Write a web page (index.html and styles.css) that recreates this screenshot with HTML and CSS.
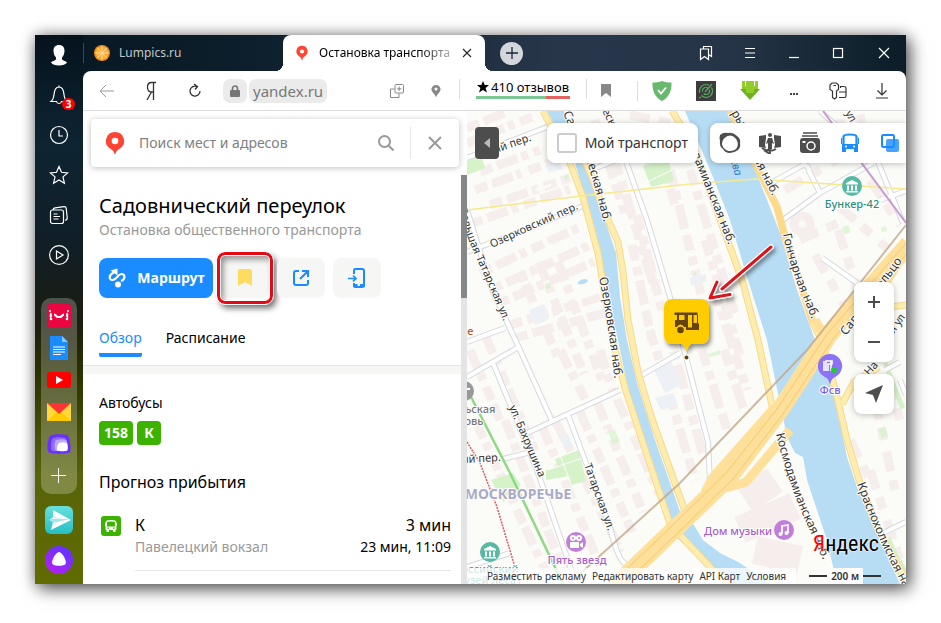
FILE: index.html
```html
<!DOCTYPE html>
<html lang="ru">
<head>
<meta charset="utf-8">
<meta name="viewport" content="width=device-width, initial-scale=1">
<title>Остановка транспорта</title>
<link rel="stylesheet" href="styles.css">
</head>
<body>
<div class="window">
  <nav class="sidebar" aria-label="Боковая панель">
    <button class="side-btn" aria-label="Профиль"><svg width="20" height="24" viewBox="0 0 20 24"><path fill="#fff" d="M10 2c3.600 0 5.600 2.300 5.500 6-.1 3-1.200 5.200-2.500 6.500v2c1 1.300 4 1.500 5 3C17 21.500 13.500 22.500 10 22.500S3 21.500 2 19.500c1-1.500 4-1.700 5-3v-2C5.700 13.200 4.600 11 4.500 8 4.400 4.300 6.400 2 10 2z"/></svg></button>
    <button class="side-btn" aria-label="Уведомления"><svg width="20" height="22" viewBox="0 0 20 22" class="line"><path d="M10 2.500v-1M2 17.500c2-1.500 2.500-3 3-7C5.400 5.500 7 3 10 3s4.600 2.500 5 7.500c.5 4 1 5.500 3 7h-5.500c-.3 1.500-1.200 2-2.500 2s-2.200-.5-2.500-2z"/></svg><span class="badge">3</span></button>
    <button class="side-btn" aria-label="История"><svg width="20" height="20" viewBox="0 0 20 20" class="line"><circle cx="10" cy="10" r="8.500"/><path d="M10 5v6h4"/></svg></button>
    <button class="side-btn" aria-label="Избранное"><svg width="20" height="20" viewBox="0 0 20 20" class="line"><path d="M10 1.500l2.500 5.800 6.200.6-4.700 4 1.400 6.300L10 15l-5.400 3.200L6 11.900l-4.700-4 6.200-.6z"/></svg></button>
    <button class="side-btn" aria-label="Коллекции"><svg width="20" height="20" viewBox="0 0 20 20" class="line"><rect x="1.500" y="5" width="13" height="13.500" rx="2"/><path d="M4 5c.2-1.500.8-2 2-2.200l9-1.200c1.500-.2 2 .4 2.200 1.700l1 9.500c.1 1.500-.6 2.200-2 2.500M4.500 9h4M4.500 11.500h6.500M4.500 14h5"/></svg></button>
    <button class="side-btn" aria-label="Видео"><svg width="20" height="20" viewBox="0 0 20 20" class="line"><circle cx="10" cy="10" r="9.400"/><path d="M7.500 6v8l6.500-4z"/></svg></button>
    <div class="dock">
      <a class="dock-item" href="#" aria-label="ivi"><svg width="24" height="24"><rect width="24" height="24" rx="3" fill="#ea0640"/><g fill="none" stroke="#fff" stroke-width="2.200"><path d="M3 9.500c1.500.5 1 3.500 0 4M21 9.500c-1.500.5-1 3.500 0 4M7 10.500c2 0 2 2.500 4 2.500h2c2 0 2-2.500 4-2.500"/></g><g fill="#fff"><circle cx="3" cy="7" r="1"/><circle cx="21" cy="7" r="1"/><circle cx="4" cy="15" r="1.300"/><circle cx="20" cy="15" r="1.300"/></g></svg></a>
      <a class="dock-item" href="#" aria-label="Документы"><svg width="24" height="24"><path fill="#1a8cff" d="M3 0h12l6 6v18H3z"/><path fill="#8bc4ff" d="M15 0l6 6h-6z"/><path stroke="#fff" stroke-width="1.200" d="M6 11h12M6 13.500h12M6 16h12M6 18.500h8"/></svg></a>
      <a class="dock-item" href="#" aria-label="YouTube"><svg width="24" height="16"><rect width="24" height="16" rx="3" fill="red"/><path fill="#fff" d="M9 4l7 4-7 4z"/></svg></a>
      <a class="dock-item" href="#" aria-label="Почта"><svg width="24" height="18"><path fill="#ffd83c" d="M0 0h24v18H0z"/><path fill="#fc0" d="M0 18L12 7l12 11z"/><path fill="#f33" d="M0 0h24L12 11z"/></svg></a>
      <a class="dock-item" href="#" aria-label="Коллекция"><svg width="24" height="20"><path fill="#6a30ff" d="M4 1C8 0 17 0 20 1c3 1 4.500 15 3 17s-19 2.500-21.500 0S1 2 4 1z"/><path fill="#8d69ff" d="M6 4c3-1 10-1 12 0s3 12 2 13H5C3 16 4 5 6 4z"/><path fill="#bba7ff" d="M9 6c3-1 8-1 10 0s2 10 1 11H9C7 16 7 7 9 6z"/><path fill="#fff" d="M12 9c2-1 6-1 7.500 0s1.500 6.500.5 7.500-8 1-9.500 0S10.500 10 12 9z"/></svg></a>
      <button class="dock-item" aria-label="Добавить"><svg width="16" height="16"><path stroke="#fff" stroke-width="1" d="M7.500 0v15M0 7.500h15"/></svg></button>
    </div>
    <button class="side-btn side-btn-first" aria-label="Мессенджер"><svg width="28" height="28"><defs><linearGradient id="tq" x1="0" y1="0" x2="0" y2="1"><stop offset="0" stop-color="#67e0dd"/><stop offset="1" stop-color="#25bfc4"/></linearGradient></defs><rect width="28" height="28" rx="6" fill="url(#tq)"/><path fill="#fff" d="M8 4l18 10L6 24l2-8-3.500-2L8 11z"/><path fill="#a7e4e6" d="M4 13h21L8 17zM7 11l14 2-14-1z"/></svg></button>
    <button class="side-btn" aria-label="Алиса"><svg width="28" height="28"><defs><linearGradient id="al" x1=".8" y1="0" x2=".2" y2="1"><stop offset="0" stop-color="#5a36ff"/><stop offset="1" stop-color="#b81ef5"/></linearGradient></defs><circle cx="14" cy="14" r="14" fill="url(#al)"/><path fill="#fff" d="M14 6c3.200 0 8 9 6.700 11.700-1.300 2.700-12.100 2.700-13.400 0C6 15 10.800 6 14 6z"/></svg></button>
  </nav>

  <div class="browser">
    <header class="tabs">
      <a class="tab" href="#"><svg width="16" height="16" viewBox="0 0 16 16"><circle cx="8" cy="8" r="8" fill="#f08a17"/><circle cx="8" cy="8" r="6.400" fill="#ffae35"/><path stroke="#ffdc9b" d="M8 1v14M1 8h14M3 3l10 10M13 3L3 13"/></svg><span>Lumpics.ru</span></a>
      <div class="tab tab-active"><svg width="12" height="16" viewBox="0 0 20 24"><path fill="#ff4433" d="M10 0a9.500 9.500 0 0 1 5 17.500c-3 1.500-4 3.500-4.500 6.500h-1C9 21 8 19 5 17.500A9.500 9.500 0 0 1 10 0z"/><circle cx="10" cy="9.500" r="3.500" fill="#fff"/></svg><span class="tab-title">Остановка транспорта</span><button aria-label="Закрыть вкладку"><svg width="10" height="10"><path stroke="#222" stroke-width="1.100" d="M1 1l8 8M9 1L1 9"/></svg></button></div>
      <button class="new-tab" aria-label="Новая вкладка"><svg width="12" height="12"><path stroke="#172939" stroke-width="1.300" d="M6 0v12M0 6h12"/></svg></button>
      <div class="window-buttons">
        <button aria-label="Закладки"><svg width="14" height="16" class="line"><path d="M1.500 4h8v10.500l-4-3-4 3zM4.500 4V1.500h8v10l-3-2"/></svg></button>
        <button aria-label="Меню"><svg width="12" height="12" class="line"><path d="M1 1.500h10M1 6h10M1 10.500h10"/></svg></button>
        <button aria-label="Свернуть"><svg width="10" height="12" class="line"><path d="M0 10.500h10"/></svg></button>
        <button aria-label="Развернуть"><svg width="12" height="12" class="line"><rect x="1.500" y="1.500" width="9" height="9"/></svg></button>
        <button aria-label="Закрыть"><svg width="12" height="12" class="line"><path d="M1 1l10 10M11 1L1 11"/></svg></button>
      </div>
    </header>

    <div class="toolbar">
      <div class="nav-buttons">
        <button aria-label="Назад"><svg width="16" height="14" fill="none" stroke="#999"><path d="M15 7H1l6-6M1 7l6 6"/></svg></button>
        <button aria-label="Яндекс"><svg width="12" height="20" fill="none" stroke="#333" stroke-width="1.300"><path d="M8.500 19V1.500H6.500C3.500 1.500 2.500 3 2.500 6s1.500 5 4 5h2M6.500 11L2 19M7 1.500h4"/></svg></button>
        <button aria-label="Обновить"><svg width="14" height="16" fill="none" stroke="#333" stroke-width="1.300"><path d="M9 3.500A5 5 0 1 0 12 8M6 1l3.500 2.500L7 6.500"/></svg></button>
      </div>
      <div class="address"><button class="lock" aria-label="Защищено"><svg width="10" height="12"><path fill="none" stroke="#777" stroke-width="1.700" d="M2.500 6V3.500a2.500 2.500 0 0 1 5 0V6"/><rect y="5" width="10" height="7" rx="1" fill="#777"/></svg></button><a class="url" href="#">yandex.ru</a></div>
      <div class="page-tools">
        <button aria-label="Копировать"><svg width="14" height="14" fill="none" stroke="#888"><rect x="5" y=".5" width="8.500" height="8.500" rx="1"/><path d="M4.500 5H.5v8.500H9V9.500M9.200 2.500V7M7 4.800h4.500"/></svg></button>
        <button aria-label="Место"><svg width="10" height="14"><path fill="#888" d="M5 1a4.300 4.300 0 0 1 3.500 7C7 10 5.500 11.500 5 13.500 4.500 11.500 3 10 1.500 8A4.300 4.300 0 0 1 5 1z"/><circle cx="5" cy="5" r="1.500" fill="#fff"/></svg></button>
      </div>
      <a class="reviews" href="#"><span><svg width="12" height="12"><path d="M6 0l1.700 4H12L8.600 7 10 11.500 6 9l-4 2.500L3.400 7 0 4h4.300z"/></svg>410 отзывов</span></a>
      <button class="bookmark" aria-label="В закладки"><svg width="10" height="14"><path fill="#888" d="M0 0h10v13L5 9l-5 4z"/></svg></button>
      <div class="extensions">
        <button aria-label="Защита"><svg width="20" height="20"><path fill="#68b86d" d="M10 0c3 1 6 1.500 9.500 1.500C20 11 16 17 10 20 4 17 0 11 .5 1.500 4 1.500 7 1 10 0z"/><path fill="none" stroke="#fff" stroke-width="1.800" d="M6 9l3 3.500 5-6"/></svg></button>
        <button aria-label="Радар"><svg width="20" height="20"><path fill="#3d3b3d" d="M0 0h20v20H0z"/><g fill="none" stroke="#53ae5a" stroke-width="1.200"><circle cx="10" cy="10" r="6.500" stroke-dasharray="15 3"/><circle cx="10" cy="10" r="3.500" stroke-dasharray="8 2"/><path d="M9 11l7-8M5 16l-2 1"/></g></svg></button>
        <button aria-label="Загрузка"><svg width="20" height="20"><path fill="#91cc2d" d="M2 0h3v5h1V0h8v5h1V0h3v8H2z"/><path fill="#6eb022" d="M0 8h20L10 19z"/><path fill="#91cc2d" d="M6 7h8v5h-8z"/></svg></button>
        <button aria-label="Ещё"><svg width="10" height="10"><path fill="#444" d="M1 7h2v2H1zM4 7h2v2H4zM7 7h2v2H7z"/></svg></button>
        <button aria-label="Пароли"><svg width="18" height="18" fill="none" stroke="#333" stroke-width="1.200"><path d="M3 1h4.500l2 2v4.500l-2 1.500v6.500L5.500 17l-2-1.500V9L1 7.500V3zM4.500 3.500H7M11.500 6V4.500H15Q17 4.500 17 6.500V14q0 1.500-1.500 1.500H10M10 10h7"/></svg></button>
        <button aria-label="Загрузки"><svg width="14" height="16" fill="none" stroke="#333" stroke-width="1.200"><path d="M7 0v12M2.500 7.500L7 12l4.500-4.500M1 15h12"/></svg></button>
      </div>
    </div>

    <main class="content">
      <section class="panel">
        <form class="search" role="search">
          <svg width="20" height="24" viewBox="0 0 20 24"><path fill="#ff4433" d="M10 1a9 9 0 0 1 5 16.500c-3 1.500-4 3-4.500 5.500h-1C9 20.500 8 19 5 17.500A9 9 0 0 1 10 1z"/><circle cx="10" cy="10" r="3.300" fill="#fff"/></svg>
          <input type="search" aria-label="Поиск" placeholder="Поиск мест и адресов">
          <button type="button" aria-label="Найти"><svg width="18" height="18" fill="none" stroke="#999" stroke-width="2"><circle cx="7.500" cy="7.500" r="5.500"/><path d="M11.500 11.500l5 5"/></svg></button>
          <button type="button" class="clear" aria-label="Закрыть"><svg width="16" height="16"><path stroke="#999" stroke-width="2" d="M2 2l12 12M14 2L2 14"/></svg></button>
        </form>
        <div class="card">
          <div class="summary">
            <h1>Садовнический переулок</h1>
            <p class="kind">Остановка общественного транспорта</p>
            <div class="actions">
              <button class="route"><svg width="20" height="20" fill="none" stroke="#fff" stroke-width="2.200"><path d="M7 4.500C1.500 6.500 1.500 12 5.500 12 9.500 12 11 6 14.500 6c4 0 4 5.500-.5 7"/><path fill="#fff" stroke="none" d="M3.500 2.500L10.500.5v7z"/><circle cx="11" cy="16.500" r="3" fill="#fff" stroke="none"/></svg>Маршрут</button>
              <button class="action marked" aria-label="Сохранить"><svg width="14" height="18"><path fill="#ffdb60" d="M2 0h10q2 0 2 2v15l-7-4-7 4V2q0-2 2-2z"/></svg></button>
              <button class="action" aria-label="Поделиться"><svg width="18" height="18" fill="none" stroke="#1a8cff" stroke-width="2"><path d="M7 2H4Q2 2 2 4v10q0 2 2 2h10q2 0 2-2v-3M8 10l7-7M10 2h6v6"/></svg></button>
              <button class="action" aria-label="Отправить на телефон"><svg width="20" height="20" fill="none" stroke="#1a8cff" stroke-width="2"><path d="M7 6V3q0-2 1-2h7q2 0 2 2v14q0 2-2 2H8q-1 0-1-2v-2"/><path d="M1 10.500h7M6 7.500l3 3-3 3" stroke-width="1.700"/><path d="M6 17.500h4.500M13 17.500h5" stroke-width="3"/></svg></button>
            </div>
            <nav class="view-tabs"><a class="current" href="#">Обзор</a><a href="#">Расписание</a></nav>
          </div>
          <div class="details">
            <h2 class="buses">Автобусы</h2>
            <div class="lines"><a href="#">158</a><a href="#">К</a></div>
            <h2>Прогноз прибытия</h2>
            <div class="arrival">
              <svg width="20" height="20"><rect width="20" height="20" rx="3" fill="#3bb300"/><path fill="none" stroke="#fff" stroke-width="1.500" d="M5.300 13V6.500Q5.300 4.800 10 4.800t4.700 1.700V13z"/><path fill="#fff" d="M5 10.500h10V14H5zM5.500 14h2.500v2H5.500zM12 14h2.500v2H12zM4 7h1v3H4zM15 7h1v3h-1z"/><path fill="#3bb300" d="M6.500 11.500H8v1.300H6.500zM12 11.500h1.500v1.300H12z"/></svg>
              <div class="arrival-text"><strong>К</strong><span>Павелецкий вокзал</span></div>
              <div class="arrival-time"><strong>3 мин</strong><span>23 мин, 11:09</span></div>
            </div>
          </div>
        </div>
      </section>

      <section class="map" aria-label="Карта">
        <svg class="map-canvas" viewBox="467 111 439 473" preserveAspectRatio="xMidYMid slice">
          <defs>
            <path id="p-oz" d="M492 248L533 229 590 204"/>
            <path id="p-ozn" d="M599 278Q608 320 616 392"/>
            <path id="p-sad" d="M563 113Q570 130 580 147T606 232"/>
            <path id="p-tat" d="M459 209Q468 241 478 262T508 332"/>
            <path id="p-kos" d="M776 434Q787 480 806 522T836 590"/>
            <path id="p-kr" d="M857 484Q872 525 889 559T912 600"/>
            <path id="p-gon" d="M783 234Q789 265 802 295T818 342"/>
            <path id="p-dam" d="M692 154Q707 190 735 262"/>
            <filter id="sh" x="-30%" y="-30%" width="160%" height="160%"><feDropShadow dx="2" dy="3" stdDeviation="2" flood-opacity=".45"/></filter>
          </defs>
          <rect x="467" y="111" width="439" height="473" fill="#fbfcf7"/>
          <g fill="none" stroke="#f5eeec" stroke-width="9">
            <path stroke-dasharray="13 5 22 4 7 6" d="M467 128l40-16M467 143l70-28M480 172l60-22M475 190l85-31M490 205l80-27M470 224l100-35M480 273l100-46M490 290l100-45M497 304l97-42M510 325l90-28M515 338l90-25"/>
            <path stroke-dasharray="20 5 8 7 15 4" d="M520 272l40 90M539 262l45 112M558 262l44 118M485 335l50 116M470 350l30 70M560 350l26 51M600 350l14 45M475 420l70 150M505 420l60 155M542 426l60 145M556 422l65 130M580 412l52 120M597 402l46 110M617 399l42 95"/>
            <path stroke-dasharray="16 6 9 5 25 6" d="M595 120l30 95M615 160l40 130M637 215l25 95M670 170l35 140M690 170l45 145M705 240l35 115M650 125l25 80M668 330l35 125M650 330l45 150M714 290l33 100M702 350l25 80M724 350l20 60M632 245l20 95"/>
            <path stroke-dasharray="20 9 12 12" d="M785 190l60-35M800 240l45-20M840 207l48 42M838 230l20 60M815 255l35 60M870 180l30 45M850 440l20 40M875 400l20 90M890 380l12 50M870 470l30 90M805 132l60-14M630 115l50 10M645 165l40-10"/>
            <path stroke-width="28" d="M740 530l55-24M755 550l45 10M745 500l30-20" stroke-linejoin="round"/>
            <circle cx="802" cy="224" r="8"/>
          </g>
          <g fill="none" stroke="#fbfcf7" stroke-width="3"><path d="M490 180v14M520 165l5 14M536 190l15-5M505 290l25-9M550 244l5 18M660 250l10-4M700 280l12-4M575 300l20-7M595 435l12-5M610 455l12-5M693 310l12-4M520 400l9-3M690 390l15-4"/></g>
          <g fill="#edf0f4"><path d="M529 310l15-6 5 15-14 6zM653 368l18-7 10 24-16 8zM655 398l18-5 5 12-17 5zM690 278l16-4v7l-15 5zM545 165l13-4 5 8-14 3zM560 437l8-3 5 12-8 3z"/></g>
          <g fill="#d5f2c9"><path d="M643 166l25-8 6 23-23 6zM546 470l12-3-3-8 24-9 7 31-14 4-4-9-22 4zM491 480l22-7 8 12-18 17zM467 161l14-6 4 13-18 7zM883 548l7-12q8 20 16 32v16h-3q-14-19-20-36zM887 362l18 45-4 3-18-46z"/><path opacity=".7" d="M545 284l5-2 1 6-5 1zM608 432l7-2 5 12-7 2zM842 227l7-2 1 8-6 1zM881 228l5-2 1 5-5 1zM708 354l12-4v5l-11 2zM692 274l4-2v4zM878 429l7-3 3 10-6 3zM564 176l4-2 1 5-4 1z"/></g>
          <path fill="none" stroke="#fff" d="M548 470l34-12M560 455l10 26M645 183l27-13"/>
          <g fill="#b7ddf5">
            <path d="M547 111h17l21 52 12 34 19 56 4 44 7 43 10 43 18 57 28 80-13 0-27-80-16-57-9-43-11-43-7-44-15-56-10-34z"/>
            <path d="M685 111h43l30 66 22 56 17 57 18 50 15 37 10 46 7 34 10 30 20 46 23 51h-63l-10-44-20-60-4-23-8-4-8-16-7-34-13-63-20-63-17-57-17-43z"/>
            <path d="M675 520l17 2 11 18 17 13 20 10 30 21h-42l-28-24-25-24z"/>
            <path d="M578 282q5-5 10-2-1 5-10 4z"/>
          </g>
          <g fill="none" stroke-linejoin="round">
            <path stroke="#d7d9df" stroke-width="6" d="M467 158l80-31M467 252l63-24 53-22M467 210l25 80 28 60 32 71M467 342l38-14M467 377l50-29M527 433l93-43M493 363l44 107 36 105M568 415l42 112q8 34 16 37M503 459l24-6M642 375l38-22M623 153l24 67 23 77 16 60 22 85 2 40M783 220l37-27 53-30M773 182l30-17q6 0 6 6l11 22M873 150l30 73M822 258l35 25M467 567l43-14M883 533l23-11M596 168l25-10M880 200l26-9M885 370l15-8M820 111l20 18M900 380l6 15"/>
            <path stroke="#fff" stroke-width="4" d="M467 158l80-31M467 252l63-24 53-22M467 210l25 80 28 60 32 71M467 342l38-14M467 377l50-29M527 433l93-43M493 363l44 107 36 105M568 415l42 112q8 34 16 37M503 459l24-6M642 375l38-22M623 153l24 67 23 77 16 60 22 85 2 40M783 220l37-27 53-30M773 182l30-17q6 0 6 6l11 22M873 150l30 73M822 258l35 25M467 567l43-14M883 533l23-11M596 168l25-10M880 200l26-9M885 370l15-8M820 111l20 18M900 380l6 15"/>
            <path stroke="#f7d98a" stroke-width="7" d="M543 111l27 52 13 34 15 56 7 44 9 48 11 43 17 52 29 87M567 123l25 54 12 34 14 31 5 30 5 48 10 52 13 44 35 98M672 111l20 32 38 104 13 36 15 57 16 75M730 111l22 46 25 50 8 30 28 86 10 20 14 54 10 43 13 43 17 44 29 53M680 535l30 32 18 17M842 404l12-22 25-15M866 310l40-5"/>
            <path stroke="#ffedb0" stroke-width="5" d="M543 111l27 52 13 34 15 56 7 44 9 48 11 43 17 52 29 87M567 123l25 54 12 34 14 31 5 30 5 48 10 52 13 44 35 98M672 111l20 32 38 104 13 36 15 57 16 75M730 111l22 46 25 50 8 30 28 86 10 20 14 54 10 43 13 43 17 44 29 53M680 535l30 32 18 17M842 404l12-22 25-15M866 310l40-5"/>
            <path stroke="#ffd98a" stroke-width="7" d="M730 111l22 46 25 50 8 30 28 86"/>
          </g>
          <g fill="none" stroke="#ffe09a" stroke-linejoin="round">
            <path stroke-width="9" d="M775 407l-62 70-8 15M790 430l-44 52-20 6M815 320l12 20M900 260l-38 60"/>
            <path stroke-width="18" d="M909 244l-79 89-50 77-50 66-50 48-65 62"/>
          </g>
          <g fill="none" stroke="#f8c76c"><path d="M909 240l-82 94-50 75-50 63-50 49-65 62M909 251l-76 88-50 75-50 65-50 49-65 62"/></g>
          <g fill="none" stroke-width="1.500">
            <path stroke="#f6e98d" d="M467 210l114-14 109-12 66-5 150 10"/>
            <path stroke="#c79bd3" stroke-width="2" d="M823 111l83 112"/>
            <path stroke="#bfa387" stroke-width="2" opacity=".75" d="M906 225l-99 125-127 133-110 100"/>
            <path stroke="#8fd982" stroke-width="2.500" d="M470 395l40 78 53 111"/>
            <path stroke="#fff" stroke-width="3" d="M467 442l13 21 17 44 23 77"/>
            <path stroke="#e7525c" stroke-dasharray="2 1" d="M467 442l13 21 17 44 23 77"/>
          </g>
          <g class="street-label">
            <text transform="translate(478 159) rotate(-19)">нский пер.</text>
            <text><textPath href="#p-oz">Озерковский пер.</textPath></text>
            <text class="big"><textPath href="#p-ozn">Озерковская наб.</textPath></text>
            <text class="big"><textPath href="#p-sad">Садовническая наб.</textPath></text>
            <text><textPath href="#p-tat">Большая Татарская ул.</textPath></text>
            <text transform="translate(509 407) rotate(67)">ул. Бахрушина</text>
            <text transform="translate(584 465) rotate(70)">Татарская ул.</text>
            <text transform="translate(462 463) rotate(-3)">ий пер.</text>
            <text class="big"><textPath href="#p-kos">Космодамианская наб.</textPath></text>
            <text class="big"><textPath href="#p-kr">Краснохолмская наб.</textPath></text>
            <text class="big"><textPath href="#p-gon">Гончарная наб.</textPath></text>
            <text class="big"><textPath href="#p-dam">дамианская наб.</textPath></text>
            <text class="big" transform="translate(751 154) rotate(63)">кая наб.</text>
            <text class="big" transform="translate(731 113) rotate(60)">ры</text>
            <text transform="translate(602 111) rotate(62)">еск</text>
            <text transform="translate(845 113) rotate(60)">ул.</text>
            <text class="big" transform="translate(846 336) rotate(-53)">Садовое кольцо</text>
            <text transform="translate(894 334) rotate(-56)">я ул</text>
            <text transform="translate(869 376) rotate(-48)">На</text>
          </g>
          <text class="water" transform="translate(730 160) rotate(72)">ква</text>
          <text class="district" x="518" y="499">МОСКВОРЕЧЬЕ</text>
          <g class="poi">
            <circle cx="852" cy="186" r="10" fill="#57b9a3"/><path fill="#fff" d="M852 180l6 3v1.500h-12V183zM847 185.500h2v5h-2zM851 185.500h2v5h-2zM855 185.500h2v5h-2zM846 191h12v1.500h-12z"/>
            <text x="852" y="208" fill="#2c8f7c">Бункер-42</text>
            <circle cx="490" cy="552" r="10" fill="#57b9a3"/><path fill="#fff" d="M490 546l6 3v1.500h-12V549zM485 551.500h2v5h-2zM489 551.500h2v5h-2zM493 551.500h2v5h-2zM484 557h12v1.500h-12z"/>
            <text x="490" y="573" fill="#47a492">оссийский</text><text x="490" y="584" fill="#47a492">узей леса</text>
            <circle cx="576" cy="542" r="10" fill="#c17edb"/><path fill="#fff" d="M570 542h9v6h-9zM580 544l3-2v6l-3-2z"/><circle cx="573" cy="538" r="3" fill="#fff"/><circle cx="579" cy="538" r="3" fill="#fff"/><circle cx="573" cy="538" r="1" fill="#c17edb"/><circle cx="579" cy="538" r="1" fill="#c17edb"/>
            <text x="577" y="564" fill="#a95dcb">Пять звезд</text>
            <circle cx="784" cy="530" r="10" fill="#c17edb"/><path fill="none" stroke="#fff" stroke-width="1.700" d="M782 534v-8l6-1v8"/><circle cx="780.500" cy="534" r="2" fill="#fff"/><circle cx="786.500" cy="533" r="2" fill="#fff"/>
            <text x="738" y="535" fill="#a95dcb">Дом музыки</text>
            <path fill="#8c72f4" d="M830 354a12 12 0 0 1 6 22.500q-5 2-5.500 7h-1q-.5-5-5.500-7A12 12 0 0 1 830 354z"/><path fill="none" stroke="#fff" stroke-width="1.600" d="M824 361v10M826 371v-10h6v3h-4v7M831 361v10"/><circle cx="834" cy="370" r="3" fill="#21c93b"/>
            <text x="830" y="394" fill="#765ced">Фсв</text>
            <circle cx="464" cy="391" r="10" fill="#999"/><path stroke="#fff" stroke-width="2" d="M464 389h6"/>
            <text x="477" y="413" fill="#777">льская</text><text x="471" y="425" fill="#777">ковь</text>
            <text x="467" y="335" fill="#bb5c18">ле</text>
          </g>
          <g>
            <path fill="#fc0" filter="url(#sh)" d="M673 299h27q9 0 9 9v27q0 9-9 9h-9q-4 3-4.500 8-.5-5-4.500-8h-9q-9 0-9-9v-27q0-9 9-9z"/>
            <path fill="#65440c" d="M674.500 312.500h23v2.500h-23zM677 315h2v5h5.500v-5h1.500v12h-2q-1-2.500-3.500-2.500t-3.500 2.500h-2v-7h2zM686 315h2v12.500h4V315h1.500v8h3.500v-8h1v8l1 1v6H686z"/>
            <circle cx="680.500" cy="330" r="3.300" fill="#65440c"/>
            <circle cx="686.500" cy="357.500" r="3" fill="#fff"/><circle cx="686.500" cy="357.500" r="2" fill="#65440c"/>
          </g>
          <g class="pointer" filter="url(#sh)"><path d="M771 247l-49 42M717 282l-7 16 20-3.500" stroke="#fff" stroke-width="5.500"/><path d="M771 247l-49 42M717 282l-7 16 20-3.500" stroke="#d8121b" stroke-width="3"/></g>
        </svg>

        <div class="map-top">
          <button class="collapse" aria-label="Скрыть панель"><svg width="8" height="10"><path fill="#bbb" d="M7 0v10L1 5z"/></svg></button>
          <label class="my-transport"><input type="checkbox">Мой транспорт</label>
          <div class="map-tools">
            <button aria-label="Дороги"><svg width="24" height="22"><path fill="#4d4d4d" fill-rule="evenodd" d="M2 3q3-3 8-2 5-1 9 3 4 3 3 7 1 4-2 7-4 3-8 3-5 0-7-4-4-3-3-8-1-3 0-6zM12 3.500q-3 0-6 3-3 4-1.500 7.500t6 5q5 .5 7.500-2 2.500-3 1.500-7-2-6-7.500-6.500z"/></svg></button>
            <button aria-label="Панорамы"><svg width="24" height="22"><path fill="#4d4d4d" d="M1 4l7-1v3l-1 7 1 3-7-1zM23 4l-7-1v3l1 7-1 3 7-1zM10 6h4l2 6-2-1v6h-4v-6l-2 1z"/><circle cx="12" cy="3" r="2" fill="#4d4d4d"/><path fill="none" stroke="#4d4d4d" stroke-width="1.800" d="M4 16q7 5 14 1M7 19l5-2v5z"/></svg></button>
            <button aria-label="Фото"><svg width="22" height="22"><path stroke="#4d4d4d" stroke-width="1.400" d="M4 1h14M3 4h16"/><rect x="1" y="6" width="20" height="15" rx="3" fill="#4d4d4d"/><circle cx="12" cy="14" r="4" fill="none" stroke="#fff" stroke-width="1.500"/><path fill="#fff" d="M3.500 9h3v2h-3z"/></svg></button>
            <button aria-label="Транспорт"><svg width="20" height="20"><path fill="none" stroke="#1a8cff" stroke-width="2.200" d="M3.500 13V3.500Q4 1.500 10 1.500t6.500 2V13"/><path fill="#1a8cff" d="M2 11h16v8h-4v-3H6v3H2zM1 5h1v6H1zM18 5h1v6h-1z"/><circle cx="6" cy="13.500" r="1" fill="#fff"/><circle cx="14" cy="13.500" r="1" fill="#fff"/></svg></button>
            <button aria-label="Слои"><svg width="20" height="20"><rect x="6" y="6" width="13" height="13" rx="2" fill="#48a3ff"/><rect x="2" y="2" width="12" height="12" rx="1.500" fill="none" stroke="#1a8cff" stroke-width="2"/></svg></button>
          </div>
        </div>
        <div class="map-controls">
          <div class="zoom"><button aria-label="Приблизить"><svg width="12" height="12"><path stroke="#4d4d4d" stroke-width="2" d="M6 0v12M0 6h12"/></svg></button><button aria-label="Отдалить"><svg width="12" height="12"><path stroke="#4d4d4d" stroke-width="2" d="M0 6h12"/></svg></button></div>
          <button class="locate" aria-label="Моё местоположение"><svg width="18" height="18"><path fill="#4d4d4d" d="M18 0l-7 18-3-8-8-2z"/></svg></button>
        </div>
        <div class="map-logo"><span>Я</span>ндекс</div>
        <footer class="map-footer">
          <a href="#">Разместить рекламу</a><a href="#">Редактировать карту</a><a href="#">API Карт</a><a href="#">Условия</a>
          <span class="scale">200 м</span>
        </footer>
      </section>
    </main>
  </div>
</div>
</body>
</html>
```
FILE: styles.css
```css
* { box-sizing: border-box; }

body {
  margin: 0;
  min-height: 100vh;
  display: flex;
  padding: 35px 35px 39px;
  background: #fff;
  color: #000;
  font: 14px/20px "Noto Sans", "Open Sans", sans-serif;
}

button { padding: 0; border: 0; background: none; font: inherit; color: inherit; }
a { color: inherit; text-decoration: none; }
h1, h2, p { margin: 0; font-weight: 400; }
svg { display: block; flex: none; }
.line { fill: none; stroke: #fff; stroke-width: 1.2px; }

.window {
  flex: 1;
  display: flex;
  min-width: 0;
  box-shadow: 4px 5px 16px rgba(0, 0, 0, .6), 0 0 14px rgba(0, 0, 0, .3);
  background: linear-gradient(90deg, #071722, #0d1f2c 25%, #27364a 60%, #263447 80%, #0b1d28) top / 100% 60px no-repeat;
}

/* Sidebar */
.sidebar {
  width: 48px;
  flex: none;
  display: flex;
  flex-direction: column;
  align-items: center;
  padding-bottom: 4px;
  background: linear-gradient(#05131d, #0e2432 20%, #101e27 38%, #1b1d10 52%, #2c3200 62%, #58630a 80%, #606c00);
}
.side-btn {
  position: relative;
  width: 48px;
  height: 40px;
  display: grid;
  place-items: center;
}
.side-btn-first { margin-top: 6px; }
.badge {
  position: absolute;
  left: 27px;
  top: 23px;
  width: 13px;
  height: 12px;
  border-radius: 6px;
  background: #f00;
  color: #fff;
  font-size: 10px;
  font-weight: 700;
  line-height: 12px;
}
.dock {
  margin-top: 23px;
  padding: 2px;
  border-radius: 10px;
  background: rgba(255, 255, 255, .24);
}
.dock-item { width: 32px; height: 32px; display: grid; place-items: center; }

/* Tabs */
.browser { flex: 1; min-width: 0; display: flex; flex-direction: column; }
.tabs { height: 36px; display: flex; align-items: center; font-size: 12px; }
.tab {
  width: 200px;
  height: 20px;
  display: flex;
  align-items: center;
  gap: 9px;
  padding-left: 10px;
  border-left: 1px solid #3b4852;
  color: #c4c8cb;
}
.tab-active {
  position: relative;
  width: 202px;
  height: 36px;
  gap: 11px;
  padding: 0 13px;
  border: 0;
  border-radius: 8px 8px 0 0;
  background: #fff;
  color: #000;
}
.tab-active::before,
.tab-active::after {
  content: "";
  position: absolute;
  bottom: 0;
  width: 8px;
  height: 8px;
}
.tab-active::before { right: 100%; background: radial-gradient(circle at 0 0, transparent 8px, #fff 8px); }
.tab-active::after { left: 100%; background: radial-gradient(circle at 100% 0, transparent 8px, #fff 8px); }
.tab-title {
  flex: 1;
  white-space: nowrap;
  mask-image: linear-gradient(90deg, #000 75%, rgba(0, 0, 0, .3));
}
.tab-active button { width: 10px; }
.new-tab {
  width: 23px;
  height: 23px;
  margin-left: 15px;
  border-radius: 50%;
  background: #d3d7dc;
  display: grid;
  place-items: center;
}
.window-buttons { display: flex; margin-left: auto; }
.window-buttons,
.extensions { padding-right: 2px; }
.window-buttons button,
.extensions button { width: 44px; height: 36px; display: grid; place-items: center; }
.window-buttons button:last-child { padding-left: 4px; }

/* Toolbar */
.toolbar {
  height: 40px;
  display: flex;
  align-items: center;
  border-radius: 8px 8px 0 0;
  border-bottom: 1px solid #dedede;
  background: #fff;
}
.nav-buttons { display: flex; padding: 0 6px 0 2px; }
.nav-buttons button { width: 44px; height: 36px; display: grid; place-items: center; }
.address { display: flex; gap: 2px; }
.lock, .url { height: 24px; border-radius: 7px; background: #ebebeb; }
.lock { width: 24px; display: grid; place-items: center; }
.url { padding: 0 4px; color: #777; font-size: 15px; line-height: 24px; }
.page-tools { display: flex; margin-left: auto; }
.page-tools button { width: 39px; display: grid; place-items: center; }
.reviews {
  align-self: flex-start;
  margin: 8px 0 0 4px;
  padding: 0 16px;
  border: solid #ddd;
  border-width: 0 1px;
  font-size: 13px;
  line-height: 16px;
}
.reviews span { display: flex; align-items: center; gap: 2px; padding: 0 1px 1px; border-bottom: 3px solid; border-image: linear-gradient(90deg, #7ac793 74%, #e46464 74%) 1; white-space: nowrap; }
.bookmark { width: 51px; height: 20px; display: grid; place-items: center; padding-right: 12px; border-right: 1px solid #ddd; }
.extensions { display: flex; padding-left: 2px; }

/* Stop card */
.content { flex: 1; display: flex; min-height: 0; }
.panel { width: 384px; flex: none; display: flex; flex-direction: column; background: #fff; }
.search {
  height: 48px;
  margin: 8px 8px 0;
  padding: 0 1px 0 14px;
  display: flex;
  align-items: center;
  border-radius: 4px;
  box-shadow: 0 1px 6px rgba(0, 0, 0, .25);
}
.search input {
  flex: 1;
  min-width: 0;
  padding: 0 14px;
  border: 0;
  outline: 0;
  background: none;
  font: inherit;
}
.search input::placeholder { color: #808080; opacity: 1; }
.search button { width: 48px; height: 32px; display: grid; place-items: center; }
.search .clear { border-left: 1px solid #e6e6e6; }
.card {
  flex: 1;
  margin-top: 8px;
  background: linear-gradient(#848887 123px, #e4e4e4 123px) right / 6px 100% no-repeat;
}
.summary {
  padding: 17px 16px 8px;
  border-bottom: 1px solid #e4e4e4;
}
h1 { font-size: 20px; line-height: 28px; }
.kind { color: #999; line-height: 20px; }
.actions { display: flex; gap: 8px; margin-top: 18px; }
.actions button { height: 40px; border-radius: 8px; display: flex; align-items: center; justify-content: center; }
.actions .route { width: 114px; gap: 10px; background: #1a8cff; color: #fff; font-weight: 700; }
.actions .action { position: relative; width: 48px; background: #f6f6f5; }
.marked::after {
  content: "";
  position: absolute;
  inset: -6px -4px;
  border: 3px solid #e50914;
  border-radius: 8px;
  outline: 1px solid #fff;
  box-shadow: 3px 4px 6px rgba(0, 0, 0, .6), inset 0 0 0 1px #fff, inset 3px 4px 6px rgba(0, 0, 0, .45);
}
.view-tabs { display: flex; gap: 24px; margin-top: 28px; }
.view-tabs a { height: 31px; line-height: 24px; }
.view-tabs .current { color: #1a8cff; border-bottom: 4px solid #1a8cff; border-radius: 0 0 2px 2px; }
.details { margin-right: 6px; padding: 19px 10px 0 16px; border-top: 8px solid #f6f6f5; }
h2 { font-size: 16px; line-height: 24px; }
.buses { font-size: 14px; line-height: 20px; }
.lines { display: flex; gap: 4px; margin: 8px 0 25px; }
.lines a { padding: 0 5px; min-width: 24px; border-radius: 4px; background: #3bb300; color: #fff; font-weight: 700; line-height: 24px; text-align: center; }
.arrival { display: flex; align-items: flex-start; margin-top: 19px; padding-left: 2px; }
.arrival > svg { margin-top: 3px; }
.arrival-text, .arrival-time { padding-bottom: 13px; border-bottom: 1px solid #e8e8e8; }
.arrival-text { flex: 1; margin-left: 14px; }
.arrival-time { text-align: right; }
.arrival strong, .arrival span { display: block; }
.arrival strong { font-size: 16px; line-height: 24px; font-weight: 400; }
.arrival-text span { color: #999; }

/* Map */
.map { flex: 1; min-width: 0; position: relative; display: flex; flex-direction: column; overflow: hidden; }
.map > * { position: relative; }
.map .map-canvas { position: absolute; inset: 0; width: 100%; height: 100%; }
.map-canvas text { font-family: "Noto Sans", sans-serif; paint-order: stroke; stroke: #fff; stroke-width: 2px; stroke-linejoin: round; }
.street-label { font-size: 11px; fill: #333; }
.street-label .big { font-size: 12px; }
.water { font-size: 11px; font-style: italic; fill: #2a7ac4; }
.map-canvas .water { stroke: none; }
.district { font-size: 14px; font-weight: 700; fill: #a9aac9; text-anchor: middle; }
.poi text { font-size: 11px; font-weight: 500; text-anchor: middle; }
.pointer { fill: none; stroke-linecap: round; stroke-linejoin: round; }

.map-top { display: flex; align-items: center; margin: 12px 0 0 8px; }
.map-top button { display: grid; place-items: center; }
.collapse { width: 24px; height: 32px; border-radius: 4px; background: #4d4d4d; }
.my-transport,
.map-tools,
.zoom,
.locate { background: #fff; box-shadow: 0 1px 6px rgba(0, 0, 0, .25); border-radius: 8px; }
.my-transport { display: flex; align-items: center; gap: 8px; height: 40px; margin: 0 12px 0 auto; padding: 0 10px; color: #333; white-space: nowrap; }
.my-transport input { appearance: none; width: 20px; height: 20px; margin: 0; border: 2px solid #ccc; border-radius: 3px; background: #fff; }
.map-tools { display: flex; height: 40px; border-radius: 8px 0 0 8px; }
.map-tools button { width: 40px; height: 40px; }
.map-tools button:last-child { width: 36px; padding-left: 4px; }
.map-controls { display: flex; flex-direction: column; align-items: flex-end; gap: 12px; margin: 119px 12px auto 0; }
.map-controls button { width: 40px; height: 40px; display: grid; place-items: center; }
.map-logo {
  align-self: flex-end;
  margin: 0 27px 8px 0;
  font: 22px/32px "Roboto Condensed", Roboto, sans-serif;
  text-shadow: 0 0 2px #fff, 0 0 2px #fff;
}
.map-logo span { color: #f00; }
.map-footer {
  display: flex;
  gap: 6px;
  padding: 0 25px 0 20px;
  height: 16px;
  align-items: center;
  white-space: nowrap;
  background: linear-gradient(90deg, rgba(255, 255, 255, .75) 75%, transparent 75%);
  font-size: 10px;
  line-height: 16px;
  color: #333;
}
.scale { display: flex; align-items: center; gap: 4px; margin-left: auto; background: linear-gradient(#fff, #fff) center / 36px 100% no-repeat; font-weight: 600; }
.scale::before, .scale::after { content: ""; width: 18px; height: 2px; background: #333; }
```
